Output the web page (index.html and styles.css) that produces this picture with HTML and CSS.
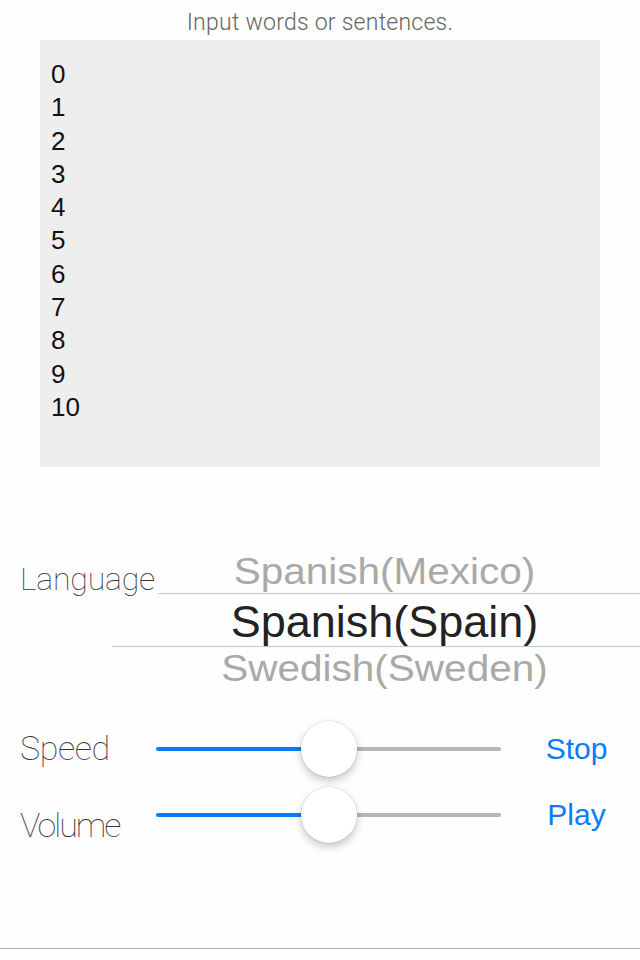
FILE: index.html
```html
<!DOCTYPE html>
<html lang="en">
<head>
<meta charset="utf-8">
<title>Speech</title>
<link rel="stylesheet" href="styles.css">
</head>
<body>
<main class="screen">
  <header class="title">Input words or sentences.</header>
  <div class="textbox">
    <div class="line">0</div>
    <div class="line">1</div>
    <div class="line">2</div>
    <div class="line">3</div>
    <div class="line">4</div>
    <div class="line">5</div>
    <div class="line">6</div>
    <div class="line">7</div>
    <div class="line">8</div>
    <div class="line">9</div>
    <div class="line">10</div>
  </div>

  <section class="lang">
    <div class="lang-label">Language</div>
    <div class="picker">
      <div class="opt side">Spanish(Mexico)</div>
      <div class="sep sep-top"></div>
      <div class="opt sel">Spanish(Spain)</div>
      <div class="sep sep-bottom"></div>
      <div class="opt side">Swedish(Sweden)</div>
    </div>
  </section>

  <section class="controls">
    <div class="ctrl">
      <div class="ctrl-label">Speed</div>
      <div class="slider">
        <div class="fill"></div>
        <div class="knob"></div>
        <div class="rest"></div>
      </div>
      <div class="btn">Stop</div>
    </div>
    <div class="ctrl">
      <div class="ctrl-label low">Volume</div>
      <div class="slider">
        <div class="fill"></div>
        <div class="knob"></div>
        <div class="rest"></div>
      </div>
      <div class="btn">Play</div>
    </div>
  </section>

  <div class="bottom-line"></div>
</main>
</body>
</html>
```
FILE: styles.css
```css
html, body {
  margin: 0;
  padding: 0;
  background: #fefefe;
}

.screen {
  width: 640px;
  height: 960px;
  display: flex;
  flex-direction: column;
  font-family: "Liberation Sans", Arial, sans-serif;
  overflow: hidden;
}

.title {
  height: 40px;
  display: flex;
  align-items: center;
  justify-content: center;
  padding-top: 4px;
  box-sizing: border-box;
  font-family: Roboto, "Liberation Sans", sans-serif;
  font-weight: 300;
  font-size: 23px;
  letter-spacing: 0.25px;
  color: #666;
}

.textbox {
  margin: 0 40px;
  height: 427px;
  box-sizing: border-box;
  background: #eeeeee;
  padding: 18px 11px 0;
  font-size: 26px;
  line-height: 33.3px;
  color: #111;
}

.lang {
  margin-top: 80px;
  display: grid;
  grid-template-columns: 129px 1fr;
}

.lang-label {
  padding-left: 20px;
  padding-top: 13px;
  font-family: Roboto, "Liberation Sans", sans-serif;
  font-weight: 100;
  font-size: 32px;
  letter-spacing: -0.2px;
  color: #333;
  white-space: nowrap;
}

.picker {
  display: flex;
  flex-direction: column;
}

.opt {
  text-align: center;
  white-space: nowrap;
}

.side {
  height: 46px;
  line-height: 50px;
  font-size: 40.5px;
  color: #a9a9a9;
  transform: scaleY(0.9);
}

.side:last-child {
  line-height: 42px;
}

.sel {
  height: 52px;
  line-height: 56px;
  font-size: 45px;
  color: #222;
}

.sep {
  height: 1px;
  background: #c8c8c8;
}

.sep-top {
  margin-left: 29px;
}

.sep-bottom {
  margin-left: -17px;
}

.controls {
  margin-top: 23px;
  display: flex;
  flex-direction: column;
}

.ctrl {
  height: 66px;
  display: grid;
  grid-template-columns: 156px 345px 1fr;
  align-items: center;
}

.ctrl-label {
  padding-left: 20px;
  padding-bottom: 2px;
  font-family: Roboto, "Liberation Sans", sans-serif;
  font-weight: 100;
  font-size: 34px;
  letter-spacing: -0.4px;
  color: #333;
}

.ctrl-label.low {
  padding-top: 20px;
  padding-bottom: 0;
  letter-spacing: -2px;
}

.slider {
  display: flex;
  align-items: center;
  height: 56px;
}

.fill {
  width: 146px;
  height: 4px;
  border-radius: 2px 0 0 2px;
  background: #0a7bff;
}

.rest {
  flex: 1;
  height: 4px;
  border-radius: 0 2px 2px 0;
  background: #b6b6b6;
}

.knob {
  width: 56px;
  height: 56px;
  flex: none;
  margin-left: -1px;
  border-radius: 50%;
  background: #fff;
  box-shadow: 0 0 0 0.5px rgba(0, 0, 0, 0.12), 0 4px 9px rgba(0, 0, 0, 0.22);
  position: relative;
  z-index: 1;
}

.btn {
  text-align: center;
  font-size: 30px;
  color: #0a7bff;
  padding-left: 12px;
}

.bottom-line {
  margin-top: auto;
  margin-bottom: 11px;
  height: 1px;
  background: #aaaaaa;
}
```
